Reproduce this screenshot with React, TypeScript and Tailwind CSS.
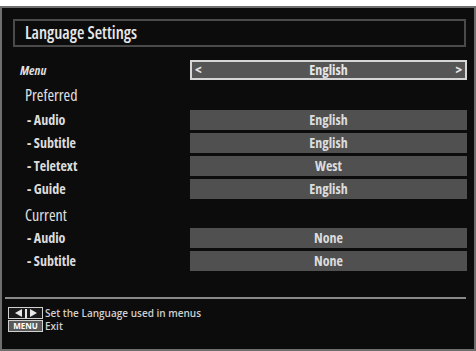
import React from "react";

const font = {
  fontFamily: '"Open Sans", "Liberation Sans", sans-serif',
  fontStretch: "75%",
};

type Row = { label: string; value?: string; heading?: number };

const rows: Row[] = [
  { label: "Preferred", heading: 30 },
  { label: "- Audio", value: "English" },
  { label: "- Subtitle", value: "English" },
  { label: "- Teletext", value: "West" },
  { label: "- Guide", value: "English" },
  { label: "Current", heading: 26 },
  { label: "- Audio", value: "None" },
  { label: "- Subtitle", value: "None" },
];

function ValueBox({ value }: { value: string }) {
  return (
    <div className="flex h-[20px] w-[277px] items-center justify-center bg-[#505050] text-[14px] font-bold leading-none text-[#dcdcdc]">
      {value}
    </div>
  );
}

function KeyHint() {
  return (
    <div className="flex h-[12px] w-[35px] items-center justify-center gap-[2px] border border-[#d0d0d0] bg-[#1a1a1a]">
      <svg width="9" height="8" viewBox="0 0 9 8">
        <path d="M8 0 L1 4 L8 8 Z" fill="#e8e8e8" />
      </svg>
      <div className="h-[9px] w-[2px] bg-[#e8e8e8]" />
      <svg width="9" height="8" viewBox="0 0 9 8">
        <path d="M1 0 L8 4 L1 8 Z" fill="#e8e8e8" />
      </svg>
    </div>
  );
}

export default function App() {
  return (
    <div className="h-[351px] w-[476px] overflow-hidden bg-white pt-[6px]" style={font}>
      <div className="flex h-[345px] w-[476px] flex-col border-2 border-[#6f6f6f] bg-[#0c0c0c]">
        <div className="ml-[11px] mt-[11px] flex h-[28px] w-[453px] items-center border-2 border-[#4a4a4a] pl-[10px] text-[17px] font-semibold text-[#e8e8e8]">
          Language Settings
        </div>

        <div className="mt-[13px] flex items-center">
          <div className="w-[188px] pl-[18px] text-[13px] font-bold italic leading-[20px] text-[#dedede]">Menu</div>
          <div className="flex h-[20px] w-[277px] items-center justify-between border-2 border-[#d6d6d6] bg-[#555555] px-[3px] text-[14px] font-bold leading-none text-[#e6e6e6]">
            <span>&lt;</span>
            <span>English</span>
            <span>&gt;</span>
          </div>
        </div>

        <div className="flex flex-col">
          {rows.map((r, i) =>
            r.heading ? (
              <div
                key={i}
                className={`flex pl-[23px] text-[16px] leading-[22px] text-[#e0e0e0] ${r.heading === 30 ? "h-[30px] items-center" : "h-[26px] items-center"}`}
              >
                {r.label}
              </div>
            ) : (
              <div key={i} className="mb-[3px] flex h-[20px] items-center">
                <div className="w-[188px] pl-[25px] text-[14px] font-bold leading-[20px] text-[#dcdcdc]">{r.label}</div>
                <ValueBox value={r.value ?? ""} />
              </div>
            )
          )}
        </div>

        <div className="ml-[3px] mt-[23px] h-[2px] w-[461px] bg-[#8a8a8a]" />

        <div
          className="mt-[8px] flex flex-col gap-[1px] pl-[6px] text-[10px] font-semibold leading-none text-[#d0d0d0]"
          style={{ fontStretch: "100%" }}
        >
          <div className="flex items-center gap-[2px]">
            <KeyHint />
            <span>Set the Language used in menus</span>
          </div>
          <div className="flex items-center gap-[2px]">
            <div className="flex h-[12px] w-[35px] items-center justify-center border border-[#d0d0d0] bg-[#5a5a5a] text-[8px] font-bold text-white">
              MENU
            </div>
            <span>Exit</span>
          </div>
        </div>
      </div>
    </div>
  );
}
